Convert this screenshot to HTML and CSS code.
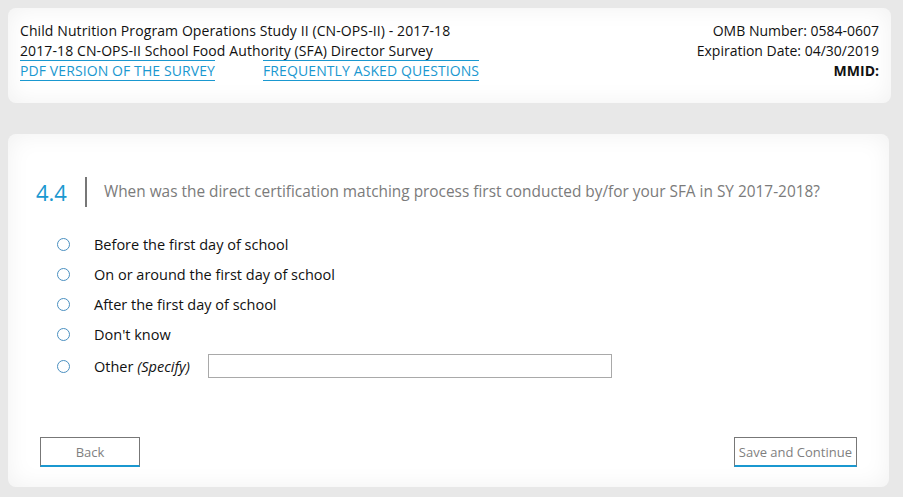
FILE: index.html
```html
<!DOCTYPE html>
<html lang="en">
<head>
    <meta charset="UTF-8">
    <title>CN-OPS-II SFA Director Survey</title>
    <link rel="stylesheet" href="styles.css">
</head>
<body>
    <header class="survey-header">
        <div class="header-left">
            <p>Child Nutrition Program Operations Study II (CN-OPS-II) - 2017-18</p>
            <p>2017-18 CN-OPS-II School Food Authority (SFA) Director Survey</p>
            <div class="header-links">
                <a href="#">PDF VERSION OF THE SURVEY</a>
                <a href="#">FREQUENTLY ASKED QUESTIONS</a>
            </div>
        </div>
        <div class="header-right">
            <p>OMB Number: 0584-0607</p>
            <p>Expiration Date: 04/30/2019</p>
            <p class="mmid">MMID:</p>
        </div>
    </header>

    <main class="question-card">
        <div class="question">
            <span class="question-number">4.4</span>
            <span class="question-text">When was the direct certification matching process first conducted by/for your SFA in SY 2017-2018?</span>
        </div>

        <ul class="options">
            <li><span class="radio"></span>Before the first day of school</li>
            <li><span class="radio"></span>On or around the first day of school</li>
            <li><span class="radio"></span>After the first day of school</li>
            <li><span class="radio"></span>Don't know</li>
            <li><span class="radio"></span>Other&nbsp;<em>(Specify)</em><input type="text" class="specify"></li>
        </ul>

        <div class="nav-buttons">
            <button class="btn btn-back">Back</button>
            <button class="btn">Save and Continue</button>
        </div>
    </main>
</body>
</html>
```

FILE: styles.css
```css
:root {
    --bg: #e8e8e8;
    --blue: #1a98d0;
    --text: #111111;
    --muted: #7b7b7b;
}

* {
    margin: 0;
    padding: 0;
    box-sizing: border-box;
}

body {
    font-family: 'Open Sans', 'Noto Sans', sans-serif;
    font-size: 14px;
    color: var(--text);
    background-color: var(--bg);
    padding: 8px 12px 10px 8px;
}

.survey-header,
.question-card {
    background-color: #ffffff;
    border-radius: 8px;
    box-shadow: inset 0 0 24px rgba(0, 0, 0, 0.06);
}

.survey-header {
    display: flex;
    justify-content: space-between;
    padding: 13px 12px 21px 12px;
    line-height: 20px;
    height: 95px;
}

.header-left {
    letter-spacing: 0.1px;
}

.header-links {
    display: flex;
    gap: 48px;
}

.header-links a {
    color: var(--blue);
    text-decoration: none;
    border-top: 1px solid var(--blue);
    border-bottom: 1px solid var(--blue);
    line-height: 19px;
    margin-top: -1px;
}

.header-right {
    text-align: right;
}

.mmid {
    font-weight: 700;
}

.question-card {
    margin-top: 31px;
    margin-right: 2px;
    height: 353px;
    padding: 43px 31px 20px 28px;
    display: flex;
    flex-direction: column;
}

.question {
    display: flex;
    align-items: center;
}

.question-number {
    color: var(--blue);
    font-size: 22px;
}

.question-text {
    color: var(--muted);
    font-size: 15.4px;
    border-left: 2px solid #777777;
    margin-left: 18px;
    padding-left: 17px;
    line-height: 30px;
}

.options {
    list-style: none;
    margin-top: 22px;
    padding-left: 21px;
    font-size: 14.5px;
}

.options li {
    display: flex;
    align-items: center;
    height: 30px;
}

.options li:last-child {
    height: 32px;
    padding-top: 2px;
}

.radio {
    width: 13px;
    height: 13px;
    border: 1.5px solid #4a8fc0;
    border-radius: 50%;
    margin-right: 24px;
}

.options em {
    font-style: italic;
}

.specify {
    margin-left: 18px;
    width: 404px;
    height: 24px;
    border: 1px solid #a9a9a9;
}

.nav-buttons {
    display: flex;
    justify-content: space-between;
    margin-top: auto;
    padding-left: 4px;
    padding-right: 1px;
}

.btn {
    font-family: inherit;
    font-size: 13px;
    color: #7f7f7f;
    background: #ffffff;
    border: 1px solid #777777;
    border-bottom: 2px solid var(--blue);
    height: 30px;
    padding: 0 4px;
    cursor: pointer;
}

.btn-back {
    width: 100px;
}
```
